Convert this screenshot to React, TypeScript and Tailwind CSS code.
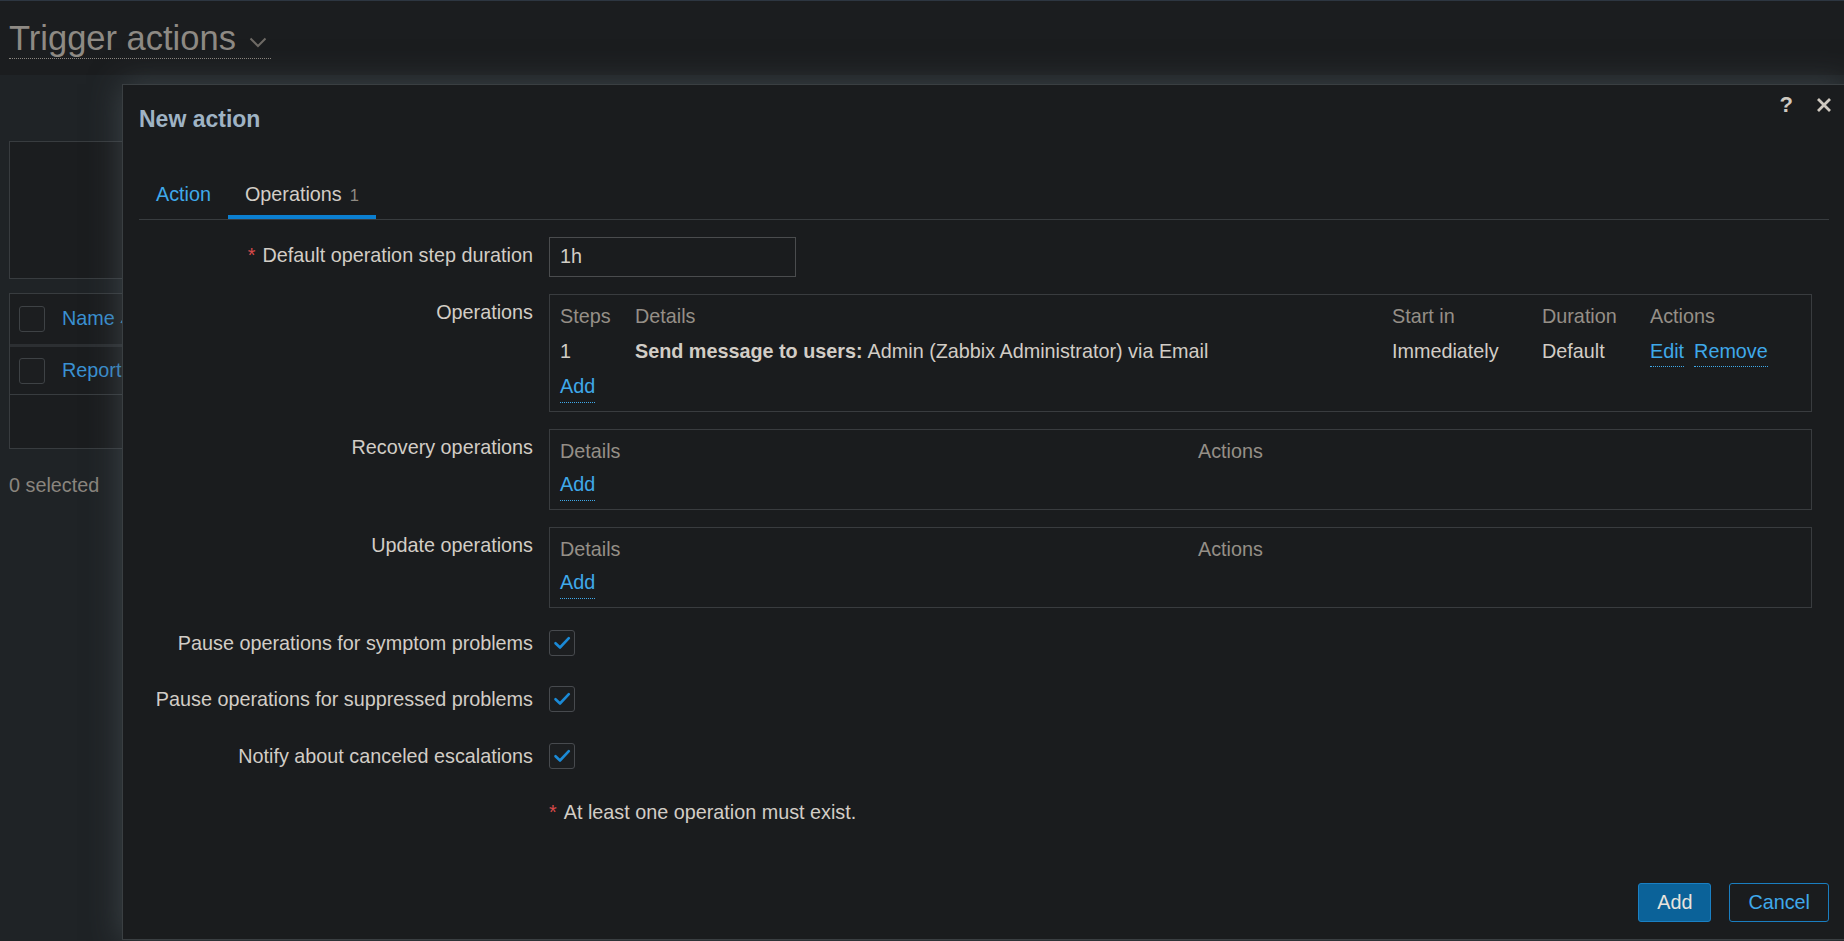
import React from "react";

const FONT = "font-['Liberation_Sans',Arial,sans-serif]";

function Link({ children }: { children: React.ReactNode }) {
  return (
    <span className="cursor-pointer border-b border-dotted border-[#3fa9ea] text-[#3fa9ea]">
      {children}
    </span>
  );
}

function Req() {
  return <span className="mr-[7px] text-[#d84a4a]">*</span>;
}

function CheckBox() {
  return (
    <span className="flex h-[26px] w-[26px] items-center justify-center rounded-[3px] border border-[#474a4e] bg-[#1c1e20]">
      <svg width="18" height="14" viewBox="0 0 18 14">
        <path
          d="M2.5 7.2 L7 11.5 L15.8 2.2"
          fill="none"
          stroke="#1b8ad6"
          strokeWidth="2.6"
          strokeLinecap="round"
          strokeLinejoin="round"
        />
      </svg>
    </span>
  );
}

function FieldLabel({ children }: { children: React.ReactNode }) {
  return (
    <div className="pt-[6px] text-right leading-[24px] text-[#d2cdc6]">{children}</div>
  );
}

function EmptyOpsBox() {
  return (
    <div className="w-[1263px] border border-[#393c3f] px-[10px] pb-[6px] pt-[5px]">
      <div className="grid grid-cols-[638px_1fr]">
        <div className="flex h-[34px] items-center text-[#958f87]">Details</div>
        <div className="flex h-[34px] items-center text-[#958f87]">Actions</div>
        <div className="flex h-[34px] items-center">
          <Link>Add</Link>
        </div>
        <div />
      </div>
    </div>
  );
}

export default function App() {
  return (
    <div
      className={`relative h-[941px] w-[1844px] overflow-hidden bg-[#1f2326] text-[19.8px] ${FONT}`}
    >
      {/* page header */}
      <header className="h-[75px] border-t border-[#2d3641] bg-[#1b1d1f] pl-[9px] pt-[17px]">
        <h1 className="inline-flex items-center border-b border-dotted border-[#8a8680] text-[34.5px] font-normal leading-[40px] text-[#8e8a84]">
          Trigger actions
          <svg
            className="ml-[13px] mr-[4px] mt-[9px]"
            width="18"
            height="11"
            viewBox="0 0 18 11"
          >
            <path d="M1.5 1.5 L9 9 L16.5 1.5" fill="none" stroke="#6f6b66" strokeWidth="2" />
          </svg>
        </h1>
      </header>

      {/* list page behind the dialog */}
      <main className="px-[9px]">
        <div className="mt-[66px] h-[138px] border border-[#383c3f] bg-[#1b1d1f]" />
        <div className="mt-[14px] h-[156px] border border-[#383c3f] bg-[#1b1d1f]">
          <div className="flex h-[53px] items-center border-b-[3px] border-[#2c2f32] pl-[9px]">
            <span className="h-[26px] w-[26px] rounded-[3px] border border-[#3e4245] bg-[#1c1e20]" />
            <span className="ml-[17px] text-[#3a91d2]">Name</span>
            <svg className="ml-[5px]" width="10" height="10" viewBox="0 0 10 10">
              <path d="M1 9 L5 2 L9 9" fill="none" stroke="#3a91d2" strokeWidth="1.5" />
            </svg>
          </div>
          <div className="flex h-[48px] items-center border-b border-[#383c3f] pl-[9px]">
            <span className="h-[26px] w-[26px] rounded-[3px] border border-[#3e4245] bg-[#1c1e20]" />
            <span className="ml-[17px] text-[#3a91d2]">Report problems to Zabbix administrators</span>
          </div>
        </div>
        <div className="mt-[24px] leading-[24px] text-[#8a857e]">0 selected</div>
      </main>

      {/* dialog */}
      <div className="absolute left-[122px] top-[84px] flex h-[856px] w-[1724px] flex-col border border-[#3a3f42] bg-[#1a1c1e] px-[16px] shadow-[0_0_30px_rgba(80,90,95,0.6)]">
        <div className="absolute right-[13px] top-[11px] flex items-center gap-[23px] text-[#cfc9c0]">
          <span className="text-[22px] font-bold leading-[18px]">?</span>
          <svg width="16" height="16" viewBox="0 0 16 16">
            <path d="M2 2 L14 14 M14 2 L2 14" stroke="#cfc9c0" strokeWidth="2.8" />
          </svg>
        </div>

        <h2 className="pt-[20px] text-[23px] font-bold leading-[28px] text-[#9fb3c4]">
          New action
        </h2>

        <div className="mt-[42px] flex border-b border-[#383c3f]">
          <div className="h-[44px] px-[17px] pt-[7px] leading-[24px] text-[#3fa9ea]">Action</div>
          <div className="relative h-[44px] px-[17px] pt-[7px] leading-[24px] text-[#d2cdc6]">
            Operations
            <span className="ml-[8px] text-[16.5px] text-[#8f8a84]">1</span>
            <span className="absolute bottom-0 left-0 right-0 h-[4px] bg-[#0b7fd0]" />
          </div>
        </div>

        <div className="mt-[17px] grid flex-1 grid-cols-[394px_1fr] content-start gap-x-[16px] gap-y-[17px]">
          <FieldLabel>
            <Req />
            Default operation step duration
          </FieldLabel>
          <div>
            <div className="flex h-[39.5px] w-[247px] items-center border border-[#4a4c4e] bg-[#1a1c1e] px-[10px] text-[#d2cdc6]">
              1h
            </div>
          </div>

          <FieldLabel>Operations</FieldLabel>
          <div className="w-[1263px] border border-[#393c3f] px-[10px] pb-[6px] pt-[5px]">
            <div className="grid grid-cols-[75px_757px_150px_108px_1fr] text-[#d2cdc6]">
              <div className="flex h-[34px] items-center text-[#958f87]">Steps</div>
              <div className="flex h-[34px] items-center text-[#958f87]">Details</div>
              <div className="flex h-[34px] items-center text-[#958f87]">Start in</div>
              <div className="flex h-[34px] items-center text-[#958f87]">Duration</div>
              <div className="flex h-[34px] items-center text-[#958f87]">Actions</div>

              <div className="flex h-[37px] items-center">1</div>
              <div className="flex h-[37px] items-center whitespace-nowrap">
                <span className="mr-[5px] font-bold">Send message to users:</span>
                Admin (Zabbix Administrator) via Email
              </div>
              <div className="flex h-[37px] items-center">Immediately</div>
              <div className="flex h-[37px] items-center">Default</div>
              <div className="flex h-[37px] items-center gap-[10px]">
                <Link>Edit</Link>
                <Link>Remove</Link>
              </div>

              <div className="flex h-[34px] items-center">
                <Link>Add</Link>
              </div>
            </div>
          </div>

          <FieldLabel>Recovery operations</FieldLabel>
          <EmptyOpsBox />

          <FieldLabel>Update operations</FieldLabel>
          <EmptyOpsBox />

          <FieldLabel>Pause operations for symptom problems</FieldLabel>
          <div className="h-[39.5px] pt-[5px]">
            <CheckBox />
          </div>

          <FieldLabel>Pause operations for suppressed problems</FieldLabel>
          <div className="h-[39.5px] pt-[5px]">
            <CheckBox />
          </div>

          <FieldLabel>Notify about canceled escalations</FieldLabel>
          <div className="h-[39.5px] pt-[5px]">
            <CheckBox />
          </div>

          <div />
          <div className="pt-[6px] leading-[24px] text-[#d2cdc6]">
            <Req />
            At least one operation must exist.
          </div>
        </div>

        <div className="flex justify-end gap-[18px] pb-[17px]">
          <button className="h-[39px] rounded-[3px] border border-[#1a80c4] bg-[#0b6299] px-[18px] text-[#e8e4de]">
            Add
          </button>
          <button className="h-[39px] rounded-[3px] border border-[#1a7ec0] bg-[#1a1c1e] px-[18px] text-[#3fa9ea]">
            Cancel
          </button>
        </div>
      </div>
    </div>
  );
}
